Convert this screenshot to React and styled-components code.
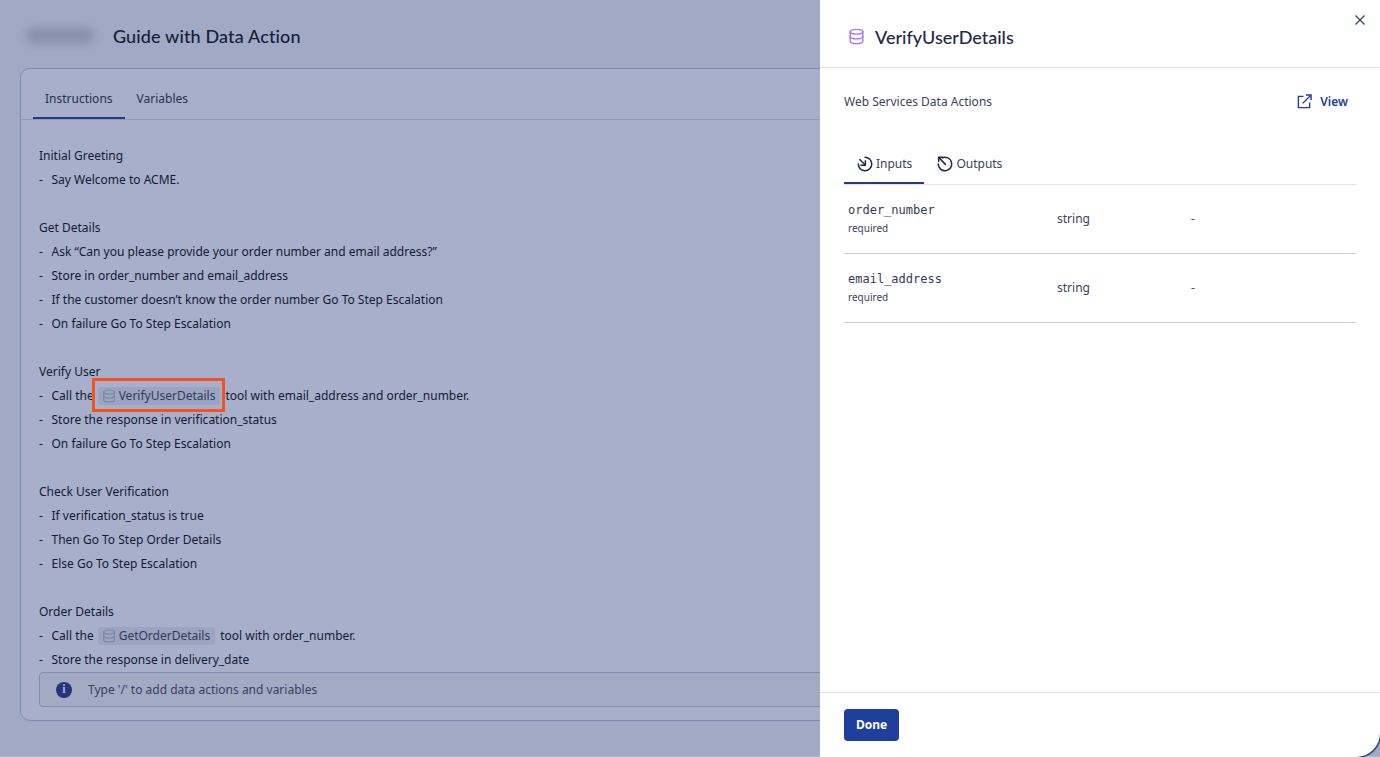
import React from 'react'
import styled, { createGlobalStyle } from 'styled-components'

const GlobalStyle = createGlobalStyle`
  html, body {
    margin: 0;
    padding: 0;
    height: 100%;
    overflow: hidden;
  }
  body {
    font-family: "Noto Sans", "Liberation Sans", sans-serif;
    font-size: 12px;
  }
`

const Page = styled.div`
  position: relative;
  width: 1380px;
  height: 757px;
  overflow: hidden;
  background: #a0aac4;
  box-shadow: inset 0 -1px 0 #b4bbd2;
`

const Main = styled.div`
  display: flex;
  flex-direction: column;
  height: 100%;
  box-sizing: border-box;
  padding: 0 20px;
`

const PageHeader = styled.div`
  display: flex;
  align-items: center;
  height: 68px;
  flex-shrink: 0;
  box-sizing: border-box;
  padding-top: 3px;
  gap: 11px;
`

const BlurredName = styled.div`
  width: 68px;
  height: 15px;
  margin-left: 6px;
  margin-right: 8px;
  border-radius: 7px;
  background: #868fa8;
  filter: blur(5px);
`

const PageTitle = styled.h1`
  margin: 0;
  font-family: Lato, Inter, sans-serif;
  font-size: 18px;
  font-weight: 500;
  letter-spacing: 0.14px;
  color: #141d39;
`

const Card = styled.div`
  position: relative;
  width: 1340px;
  height: 653px;
  box-sizing: border-box;
  border: 1px solid #7f8bb1;
  border-radius: 10px;
  background: #a7afca;
  overflow: hidden;
`

const MainTabs = styled.div`
  display: flex;
  height: 51px;
  box-sizing: border-box;
  padding-left: 12px;
  border-bottom: 1px solid #8e99bb;
`

const MainTab = styled.div`
  display: flex;
  align-items: center;
  box-sizing: border-box;
  height: 50px;
  padding: 10px 12px 0;
  margin-bottom: -1px;
  color: #29314f;
  font-size: 12px;
  border-bottom: 2px solid ${props => (props.$active ? '#27397f' : 'transparent')};
`

const Script = styled.div`
  padding: 24px 18px 0;
  height: 552px;
  overflow: hidden;
  color: #141b34;
  line-height: 24px;
`

const Line = styled.div`
  display: flex;
  align-items: center;
  height: 24px;
  white-space: pre;
  margin-top: ${props => (props.$gap ? '24px' : '0')};
`

const Dash = styled.span`
  width: 12.5px;
  flex-shrink: 0;
`

const ToolChip = styled.span`
  display: inline-flex;
  align-items: center;
  gap: 2px;
  height: 18px;
  padding: 0 5px 0 3px;
  margin: 0 ${props => props.$after}px 0 4px;
  border-radius: 3px;
  background: #9ba4c0;
  color: #333b5a;
  svg {
    width: 16px;
    height: 16px;
    color: #7d87a8;
  }
`

const Highlight = styled.span`
  position: absolute;
  left: 71px;
  top: 309px;
  width: 133px;
  height: 34px;
  box-sizing: border-box;
  border: 3px solid #f4531f;
`

const PromptBar = styled.div`
  position: absolute;
  left: 18px;
  top: 603px;
  width: 1302px;
  height: 35px;
  box-sizing: border-box;
  display: flex;
  align-items: center;
  gap: 16px;
  padding-left: 16px;
  border: 1px solid #808cb1;
  border-radius: 4px;
  background: #a3abc4;
  color: #39415f;
`

const InfoDot = styled.span`
  display: flex;
  align-items: center;
  justify-content: center;
  width: 16px;
  height: 16px;
  border-radius: 50%;
  background: #24357c;
  color: #a9b1cb;
  font-family: "Liberation Serif", serif;
  font-size: 12px;
  font-weight: 700;
`

const Drawer = styled.aside`
  position: absolute;
  top: 0;
  right: 0;
  bottom: 0;
  width: 560px;
  display: flex;
  flex-direction: column;
  background: #fff;
  border-bottom-right-radius: 24px;
  box-shadow: 1px 1px 1px #27345e;
`

const DrawerHeader = styled.header`
  position: relative;
  display: flex;
  align-items: center;
  gap: 7px;
  height: 68px;
  flex-shrink: 0;
  box-sizing: border-box;
  padding: 6px 0 0 24px;
  border-bottom: 1px solid #e2e1ee;
`

const IconTile = styled.span`
  display: flex;
  align-items: center;
  justify-content: center;
  width: 24px;
  height: 24px;
  background-color: #fff;
  background-image: radial-gradient(#dedbe9 0.6px, transparent 0.7px);
  background-size: 2px 2px;
  color: #a578f2;
  svg {
    width: 19px;
    height: 19px;
  }
`

const DrawerTitle = styled.h2`
  margin: 0;
  font-family: Lato, Inter, sans-serif;
  font-size: 18px;
  font-weight: 500;
  color: #212945;
`

const CloseButton = styled.button`
  position: absolute;
  top: 14px;
  right: 14px;
  width: 12px;
  height: 12px;
  padding: 0;
  border: 0;
  background: none;
  color: #3f4866;
  svg {
    display: block;
  }
`

const DrawerBody = styled.div`
  flex: 1;
  padding: 0 24px;
`

const ActionRow = styled.div`
  display: flex;
  align-items: center;
  justify-content: space-between;
  height: 66px;
  padding-right: 8px;
  color: #3a4260;
`

const ViewLink = styled.a`
  display: flex;
  align-items: center;
  gap: 8px;
  color: #203f9c;
  font-weight: 600;
  svg {
    width: 15px;
    height: 15px;
  }
`

const DrawerTabs = styled.div`
  display: flex;
  margin-top: 15px;
  height: 35px;
  border-bottom: 1px solid #e2e1ee;
`

const DrawerTab = styled.div`
  display: flex;
  align-items: center;
  gap: 2px;
  box-sizing: border-box;
  height: 35px;
  padding: 0 12px 4px;
  color: #3a4260;
  border-bottom: 2px solid ${props => (props.$active ? '#27397f' : 'transparent')};
  svg {
    width: 18px;
    height: 18px;
    color: #212945;
  }
`

const ParamRow = styled.div`
  display: grid;
  grid-template-columns: 209px 134px 1fr;
  align-items: center;
  height: 69px;
  box-sizing: border-box;
  padding: 0 4px;
  border-bottom: 1px solid #ced3e2;
  color: #3a4260;
`

const ParamCell = styled.div`
  padding-bottom: 2px;
`

const ParamName = styled.div`
  font-family: "DejaVu Sans Mono", "Liberation Mono", monospace;
  font-size: 12px;
  line-height: 18px;
  color: #333b59;
`

const ParamNote = styled.div`
  font-size: 10px;
  line-height: 18px;
  color: #3a4260;
`

const DrawerFooter = styled.footer`
  display: flex;
  align-items: center;
  height: 65px;
  flex-shrink: 0;
  box-sizing: border-box;
  padding: 0 0 1px 24px;
  border-top: 1px solid #e2e1ee;
`

const DoneButton = styled.button`
  width: 55px;
  height: 32px;
  padding: 0;
  border: 0;
  border-radius: 4px;
  background: #1f3f9d;
  color: #fff;
  font-family: "Noto Sans", sans-serif;
  font-size: 12px;
  font-weight: 700;
`

const DatabaseIcon = () => (
  <svg viewBox="0 0 24 24" fill="none" stroke="currentColor" strokeWidth="1.8" strokeLinecap="round" strokeLinejoin="round">
    <ellipse cx="12" cy="6" rx="8" ry="3" />
    <path d="M4 6v12c0 1.700 3.600 3 8 3s8-1.300 8-3V6" />
    <path d="M4 12c0 1.700 3.600 3 8 3s8-1.300 8-3" />
  </svg>
)

const InputsIcon = () => (
  <svg viewBox="0 0 24 24" fill="none" stroke="currentColor" strokeWidth="2" strokeLinecap="round" strokeLinejoin="round">
    <path d="M12 3a9 9 0 1 1-9 9" />
    <path d="M5 6l7 7" />
    <path d="M12.500 7.500v6h-6" />
  </svg>
)

const OutputsIcon = () => (
  <svg viewBox="0 0 24 24" fill="none" stroke="currentColor" strokeWidth="2" strokeLinecap="round" strokeLinejoin="round">
    <path d="M8.500 3.700A9 9 0 1 1 3 12" />
    <path d="M9 3H3.500v5.500" />
    <path d="M4 3.500l8.500 9" />
  </svg>
)

const ExternalIcon = () => (
  <svg viewBox="0 0 16 16" fill="none" stroke="currentColor" strokeWidth="1.500">
    <path d="M7 2.500H1.500v12h12V9" />
    <path d="M6 10l8.500-8.500" />
    <path d="M9.500 1h5.500v5.500" />
  </svg>
)

const CloseIcon = () => (
  <svg width="12" height="12" viewBox="0 0 12 12" fill="none" stroke="currentColor" strokeWidth="1.400">
    <path d="M1.500 1.500l9 9M10.500 1.500l-9 9" />
  </svg>
)

const script = [
  { text: 'Initial Greeting' },
  { text: 'Say Welcome to ACME.', item: true },
  { text: 'Get Details', gap: true },
  { text: 'Ask “Can you please provide your order number and email address?”', item: true },
  { text: 'Store in order_number and email_address', item: true },
  { text: 'If the customer doesn’t know the order number Go To Step Escalation', item: true },
  { text: 'On failure Go To Step Escalation', item: true },
  { text: 'Verify User', gap: true },
  { before: 'Call the', chip: 'VerifyUserDetails', chipAfter: 5, text: 'tool with email_address and order_number.', item: true },
  { text: 'Store the response in verification_status', item: true },
  { text: 'On failure Go To Step Escalation', item: true },
  { text: 'Check User Verification', gap: true },
  { text: 'If verification_status is true', item: true },
  { text: 'Then Go To Step Order Details', item: true },
  { text: 'Else Go To Step Escalation', item: true },
  { text: 'Order Details', gap: true },
  { before: 'Call the', chip: 'GetOrderDetails', chipAfter: 5, text: 'tool with order_number.', item: true },
  { text: 'Store the response in delivery_date', item: true },
]

const params = ['order_number', 'email_address']

const App = () => (
  <Page>
    <GlobalStyle />
    <Main>
      <PageHeader>
        <BlurredName />
        <PageTitle>Guide with Data Action</PageTitle>
      </PageHeader>
      <Card>
        <MainTabs>
          <MainTab $active>Instructions</MainTab>
          <MainTab>Variables</MainTab>
        </MainTabs>
        <Script>
          {script.map((line, i) => (
            <Line key={i} $gap={line.gap}>
              {line.item && <Dash>-</Dash>}
              {line.before}
              {line.chip && (
                <ToolChip $after={line.chipAfter}>
                  <DatabaseIcon />
                  {line.chip}
                </ToolChip>
              )}
              {line.text}
            </Line>
          ))}
        </Script>
        <Highlight />
        <PromptBar>
          <InfoDot>i</InfoDot>
          Type '/' to add data actions and variables
        </PromptBar>
      </Card>
    </Main>
    <Drawer>
      <DrawerHeader>
        <IconTile><DatabaseIcon /></IconTile>
        <DrawerTitle>VerifyUserDetails</DrawerTitle>
        <CloseButton aria-label="Close"><CloseIcon /></CloseButton>
      </DrawerHeader>
      <DrawerBody>
        <ActionRow>
          Web Services Data Actions
          <ViewLink><ExternalIcon />View</ViewLink>
        </ActionRow>
        <DrawerTabs>
          <DrawerTab $active><InputsIcon />Inputs</DrawerTab>
          <DrawerTab><OutputsIcon />Outputs</DrawerTab>
        </DrawerTabs>
        {params.map(name => (
          <ParamRow key={name}>
            <div>
              <ParamName>{name}</ParamName>
              <ParamNote>required</ParamNote>
            </div>
            <ParamCell>string</ParamCell>
            <ParamCell>-</ParamCell>
          </ParamRow>
        ))}
      </DrawerBody>
      <DrawerFooter>
        <DoneButton>Done</DoneButton>
      </DrawerFooter>
    </Drawer>
  </Page>
)

export default App
